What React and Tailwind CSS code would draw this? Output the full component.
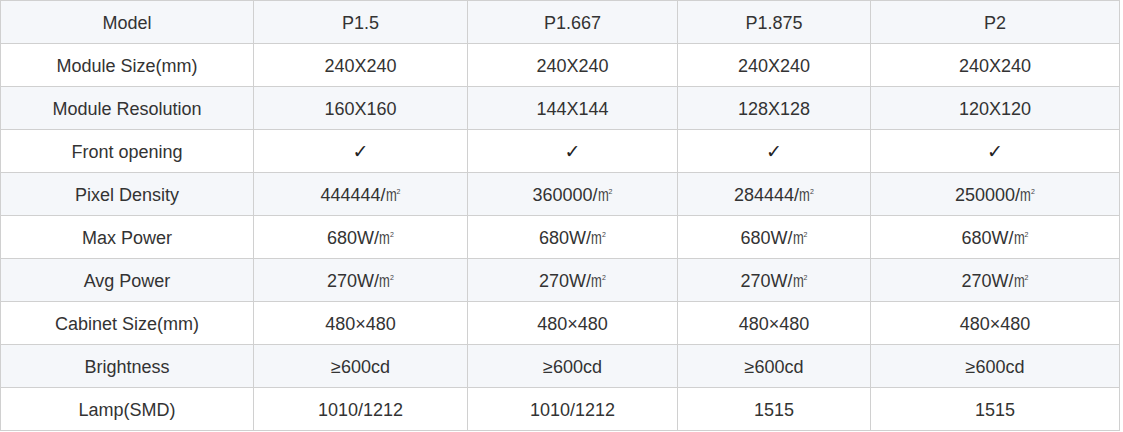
import React from "react";

const M2 = () => (
  <span className="inline-flex items-start whitespace-nowrap align-baseline text-[#444]">
    <span className="inline-block w-[11px] font-light">
      <span className="inline-block origin-left scale-x-[0.72]">m</span>
    </span>
    <span className="text-[7px] leading-none mt-[3px] font-light">2</span>
  </span>
);

const rows = [
  ["Model", "P1.5", "P1.667", "P1.875", "P2"],
  ["Module Size(mm)", "240X240", "240X240", "240X240", "240X240"],
  ["Module Resolution", "160X160", "144X144", "128X128", "120X120"],
  ["Front opening", "✓", "✓", "✓", "✓"],
  ["Pixel Density", "444444/", "360000/", "284444/", "250000/"],
  ["Max Power", "680W/", "680W/", "680W/", "680W/"],
  ["Avg Power", "270W/", "270W/", "270W/", "270W/"],
  ["Cabinet Size(mm)", "480×480", "480×480", "480×480", "480×480"],
  ["Brightness", "≥600cd", "≥600cd", "≥600cd", "≥600cd"],
  ["Lamp(SMD)", "1010/1212", "1010/1212", "1515", "1515"],
];

const widths = ["w-[253px]", "w-[214px]", "w-[210px]", "w-[193px]", "w-[249px]"];

export default function App() {
  return (
    <div className="bg-white w-[1123px] h-[432px]" style={{ fontFamily: '"Liberation Sans", Arial, "Noto Sans CJK SC", sans-serif' }}>
      <table className="border-collapse w-[1120px] table-fixed text-[18px] text-[#333]">
        <colgroup>
          {widths.map((w, i) => (
            <col key={i} className={w} />
          ))}
        </colgroup>
        <tbody>
          {rows.map((r, i) => (
            <tr key={i} className={i % 2 === 0 ? "bg-[#f5f7fa]" : "bg-white"}>
              {r.map((c, j) => (
                <td key={j} className="border border-[#d0d0d0] h-[43px] p-0 pt-[1px] text-center align-middle leading-[20px] whitespace-nowrap">
                  {c === "✓" ? (
                    <span className="font-bold text-[19px] text-[#222]" style={{ fontFamily: '"DejaVu Sans", sans-serif' }}>✓</span>
                  ) : (
                    <>
                      {c}
                      {j > 0 && (i === 4 || i === 5 || i === 6) ? <M2 /> : null}
                    </>
                  )}
                </td>
              ))}
            </tr>
          ))}
        </tbody>
      </table>
    </div>
  );
}
